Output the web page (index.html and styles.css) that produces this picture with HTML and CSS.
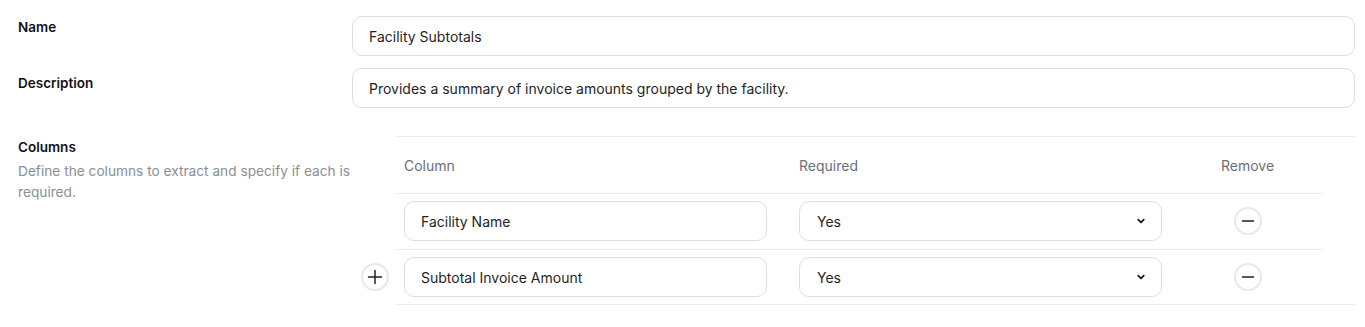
FILE: index.html
```html
<!DOCTYPE html>
<html lang="en">
<head>
<meta charset="utf-8">
<title>Facility Subtotals</title>
<link rel="stylesheet" href="styles.css">
</head>
<body>
<div class="form">
  <div class="field-row row-name">
    <div class="label-col"><div class="label">Name</div></div>
    <div class="field-col"><div class="text-input">Facility Subtotals</div></div>
  </div>
  <div class="field-row row-desc">
    <div class="label-col"><div class="label">Description</div></div>
    <div class="field-col"><div class="text-input">Provides a summary of invoice amounts grouped by the facility.</div></div>
  </div>
  <div class="field-row row-columns">
    <div class="label-col">
      <div class="label">Columns</div>
      <div class="help">Define the columns to extract and specify if each is required.</div>
    </div>
    <div class="field-col table-area">
      <div class="table-wrap">
        <div class="t-row t-head">
          <div class="cell">Column</div>
          <div class="cell">Required</div>
          <div class="cell cell-remove">Remove</div>
        </div>
        <div class="t-row t-body">
          <div class="cell"><div class="text-input small">Facility Name</div></div>
          <div class="cell">
            <div class="select-input"><span>Yes</span>
              <svg class="chev" width="10" height="10" viewBox="0 0 10 10"><path d="M2.2 3.6 L5 6.4 L7.8 3.6" fill="none" stroke="#111" stroke-width="1.6" stroke-linecap="round" stroke-linejoin="round"/></svg>
            </div>
          </div>
          <div class="cell cell-remove">
            <button class="circle-btn" aria-label="Remove"><svg width="14" height="14" viewBox="0 0 14 14"><path d="M1.5 7 H12.5" stroke="#222" stroke-width="1.5" stroke-linecap="round"/></svg></button>
          </div>
        </div>
        <div class="t-row t-body last">
          <div class="cell cell-add">
            <button class="circle-btn add-btn" aria-label="Add"><svg width="16" height="16" viewBox="0 0 16 16"><path d="M8 1.5 V14.5 M1.5 8 H14.5" stroke="#222" stroke-width="1.5" stroke-linecap="round"/></svg></button>
            <div class="text-input small">Subtotal Invoice Amount</div>
          </div>
          <div class="cell">
            <div class="select-input"><span>Yes</span>
              <svg class="chev" width="10" height="10" viewBox="0 0 10 10"><path d="M2.2 3.6 L5 6.4 L7.8 3.6" fill="none" stroke="#111" stroke-width="1.6" stroke-linecap="round" stroke-linejoin="round"/></svg>
            </div>
          </div>
          <div class="cell cell-remove">
            <button class="circle-btn" aria-label="Remove"><svg width="14" height="14" viewBox="0 0 14 14"><path d="M1.5 7 H12.5" stroke="#222" stroke-width="1.5" stroke-linecap="round"/></svg></button>
          </div>
        </div>
      </div>
    </div>
  </div>
</div>
</body>
</html>
```

FILE: styles.css
```css
* { box-sizing: border-box; }
html, body { margin: 0; padding: 0; background: #ffffff; }
body {
  font-family: Inter, "Liberation Sans", sans-serif;
  color: #1f1f24;
  font-size: 14px;
}
.form {
  padding: 16px 10px 0 18px;
  display: flex;
  flex-direction: column;
}
.field-row {
  display: flex;
  align-items: flex-start;
}
.row-desc { margin-top: 12px; }
.row-columns { margin-top: 28px; }
.label-col {
  width: 334px;
  flex: 0 0 334px;
}
.field-col {
  flex: 0 0 1003px;
  width: 1003px;
}
.label {
  font-size: 13.5px;
  font-weight: 600;
  line-height: 20px;
  color: #111114;
}
.row-name .label { padding-top: 1px; }
.row-desc .label { padding-top: 5px; }
.row-columns .label { padding-top: 1px; }
.help {
  font-size: 13.7px;
  line-height: 21px;
  color: #8b8e95;
  margin-top: 4px;
}
.text-input {
  height: 40px;
  border: 1px solid #dcdee3;
  border-radius: 10px;
  padding: 0 16px;
  display: flex;
  align-items: center;
  font-size: 14px;
  color: #1f1f24;
  background: #fff;
}
.table-area { padding-left: 44px; }
.table-wrap {
  border-top: 1px solid #ececf0;
  border-bottom: 1px solid #ececf0;
}
.t-row {
  width: 927px;
  display: grid;
  grid-template-columns: 395px 395px 137px;
  border-bottom: 1px solid #ececf0;
}
.t-row.last { border-bottom: none; }
.t-head {
  height: 57px;
  align-items: center;
  color: #6b7079;
  font-size: 14px;
}
.t-body {
  align-items: center;
  padding: 7px 0 8px;
}
.t-body.last { padding-bottom: 7px; }
.cell { padding-left: 8px; }
.cell-remove {
  padding-left: 0;
  padding-right: 14px;
  display: flex;
  justify-content: center;
}
.cell-add {
  display: flex;
  align-items: center;
}
.text-input.small { width: 363px; }
.select-input {
  width: 363px;
  height: 40px;
  border: 1px solid #dcdee3;
  border-radius: 10px;
  padding: 0 15px 0 17px;
  display: flex;
  align-items: center;
  justify-content: space-between;
  font-size: 14px;
  color: #1f1f24;
}
.circle-btn {
  width: 28px;
  height: 28px;
  border-radius: 50%;
  border: 2px solid #e8e8ec;
  background: #fff;
  display: flex;
  align-items: center;
  justify-content: center;
  padding: 0;
}
.add-btn {
  margin: 0 15px 0 -43px;
  flex: 0 0 28px;
}
```
